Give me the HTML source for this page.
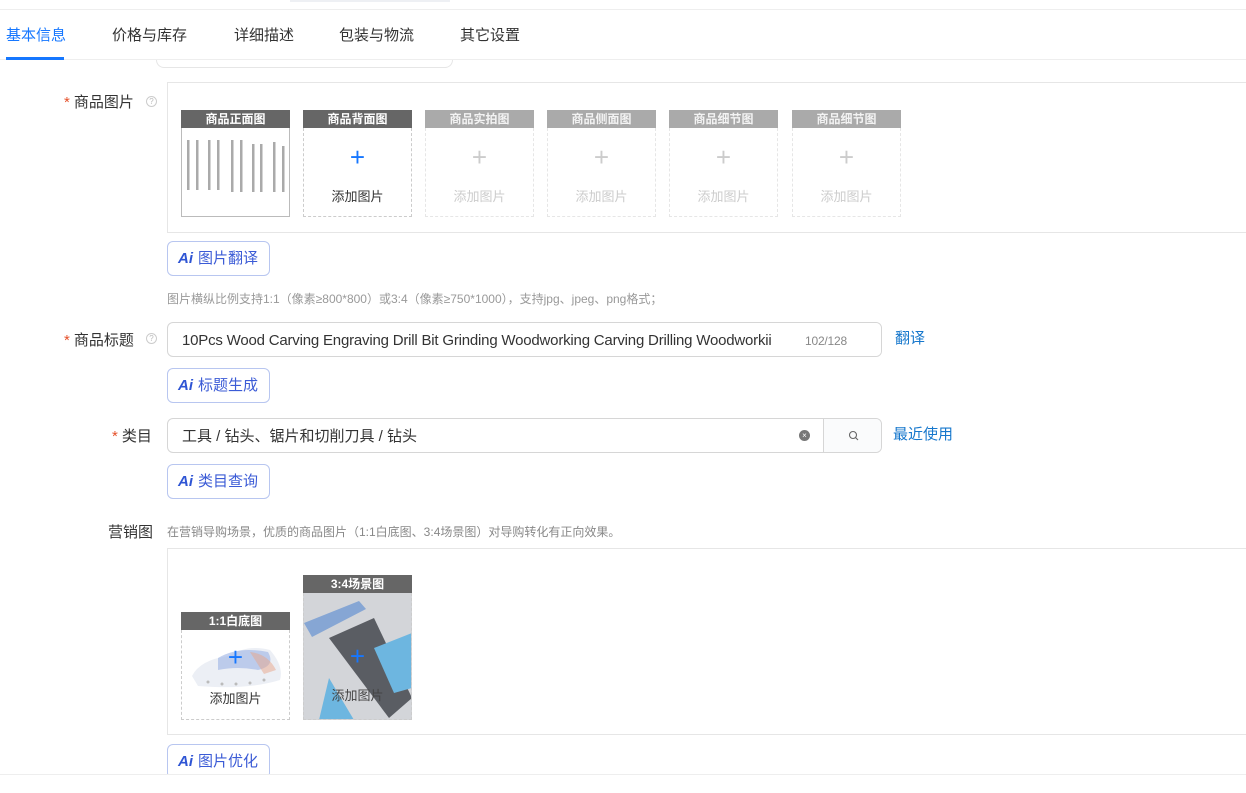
<!DOCTYPE html>
<html><head><meta charset="utf-8"><style>
*{box-sizing:border-box;margin:0;padding:0}
body{width:1246px;height:793px;overflow:hidden;background:#fff;font-family:"Liberation Sans","Noto Sans CJK SC",sans-serif;color:#333;position:relative;font-size:14px}
.a{position:absolute}
.tab{position:absolute;top:24px;font-size:15px;color:#333}
.lbl{position:absolute;font-size:15px;color:#333;text-align:right}
.req{color:#e5502a;margin-right:4px}
.help{position:absolute;width:11px;height:11px;border:1px solid #ccc;border-radius:50%;font-size:8px;color:#bbb;text-align:center;line-height:9px}
.th{position:absolute;width:109px}
.th .h{height:18px;background:#666;color:#fff;font-size:12px;text-align:center;line-height:18px;font-weight:bold}
.th .b{height:89px;border:1px dashed #ccc;border-top:none;position:relative;text-align:center}
.th .p{position:absolute;left:0;right:0;top:14px;font-size:26px;line-height:30px;color:#1677ff}
.th .t{position:absolute;left:0;right:0;top:58px;font-size:13px;color:#333}
.dis .h{background:#aaa;color:#f3f3f3}
.dis .b{border-color:#e6e6e6}
.dis .p{color:#ccc}.dis .t{color:#ccc}
.ai{position:absolute;left:167px;width:103px;height:35px;border:1px solid #b8c6f0;border-radius:6px;font-size:15px;color:#3b5bd6;line-height:33px;padding-left:10px}
.ai i{font-style:italic;font-weight:bold;color:#2f55d4;margin-right:5px;font-size:15px}
.box{position:absolute;left:167px;right:-5px;border:1px solid #e6e6e6}
.inp{position:absolute;left:167px;width:715px;height:35px;border:1px solid #d6d6d6;border-radius:6px;font-size:15px;line-height:36px;padding-left:14px;color:#333;white-space:nowrap;overflow:hidden}
.link{position:absolute;color:#1677cc;font-size:15px}
</style></head><body>
<div class="a" style="left:290px;top:0;width:160px;height:2px;background:#eef0f4"></div>
<div class="a" style="left:0;top:9px;width:1246px;height:1px;background:#eee"></div>
<div class="tab" style="left:6px;color:#1677ff">基本信息</div>
<div class="tab" style="left:112px">价格与库存</div>
<div class="tab" style="left:234px">详细描述</div>
<div class="tab" style="left:339px">包装与物流</div>
<div class="tab" style="left:460px">其它设置</div>
<div class="a" style="left:0;top:59px;width:1246px;height:1px;background:#eee"></div>
<div class="a" style="left:6px;top:57px;width:58px;height:3px;background:#1677ff"></div>
<div class="a" style="left:156px;top:60px;width:297px;height:8px;border:1px solid #e6e6e6;border-top:none;border-radius:0 0 8px 8px"></div>

<div class="lbl" style="left:64px;top:91px"><span class="req">*</span>商品图片</div>
<div class="help" style="left:146px;top:96px">?</div>
<div class="box" style="top:82px;height:151px"></div>
<div class="th" style="left:181px;top:110px"><div class="h">商品正面图</div><div class="b" style="border:1px solid #bbb;border-top:none">
<svg width="107" height="88" viewBox="0 0 107 88"><g fill="#aaa">
<rect x="5" y="12" width="2.5" height="50"/><rect x="14" y="12" width="2.5" height="50"/><rect x="26" y="12" width="2.5" height="50"/><rect x="35" y="12" width="2.5" height="50"/><rect x="49" y="12" width="2.5" height="52"/><rect x="58" y="12" width="2.5" height="52"/><rect x="70" y="16" width="2.5" height="48"/><rect x="78" y="16" width="2.5" height="48"/><rect x="91" y="14" width="2.5" height="50"/><rect x="100" y="18" width="2.5" height="46"/></g></svg></div></div>
<div class="th" style="left:303px;top:110px"><div class="h">商品背面图</div><div class="b"><div class="p">+</div><div class="t">添加图片</div></div></div>
<div class="th dis" style="left:425px;top:110px"><div class="h">商品实拍图</div><div class="b"><div class="p">+</div><div class="t">添加图片</div></div></div>
<div class="th dis" style="left:547px;top:110px"><div class="h">商品侧面图</div><div class="b"><div class="p">+</div><div class="t">添加图片</div></div></div>
<div class="th dis" style="left:669px;top:110px"><div class="h">商品细节图</div><div class="b"><div class="p">+</div><div class="t">添加图片</div></div></div>
<div class="th dis" style="left:792px;top:110px"><div class="h">商品细节图</div><div class="b"><div class="p">+</div><div class="t">添加图片</div></div></div>
<div class="ai" style="top:241px"><i>Ai</i>图片翻译</div>
<div class="a" style="left:167px;top:290px;font-size:12px;color:#999">图片横纵比例支持1:1（像素≥800*800）或3:4（像素≥750*1000），支持jpg、jpeg、png格式；</div>

<div class="lbl" style="left:64px;top:329px"><span class="req">*</span>商品标题</div>
<div class="help" style="left:146px;top:333px">?</div>
<div class="inp" style="top:322px;letter-spacing:-0.2px">10Pcs Wood Carving Engraving Drill Bit Grinding Woodworking Carving Drilling Woodworkii<span style="position:absolute;right:0;top:0;width:80px;background:#fff;color:#888;font-size:12px;padding-left:4px">102/128</span></div>
<div class="link" style="left:895px;top:327px">翻译</div>
<div class="ai" style="top:368px"><i>Ai</i>标题生成</div>

<div class="lbl" style="left:112px;top:425px"><span class="req">*</span>类目</div>
<div class="inp" style="top:418px">工具 / 钻头、锯片和切削刀具 / 钻头
<div class="a" style="left:631px;top:11px;width:11px;height:11px;border-radius:50%;background:#777;color:#fff;font-size:8px;line-height:11px;text-align:center">×</div>
<div class="a" style="left:655px;top:0;width:60px;height:33px;border-left:1px solid #d6d6d6;background:#fafbfc;text-align:center"><svg width="12" height="12" viewBox="0 0 12 12" style="margin-top:11px"><circle cx="5" cy="5" r="3.5" fill="none" stroke="#666" stroke-width="1.1"/><path d="M7.6 7.6L10 10" stroke="#666" stroke-width="1.1"/></svg></div></div>
<div class="link" style="left:893px;top:423px">最近使用</div>
<div class="ai" style="top:464px"><i>Ai</i>类目查询</div>

<div class="lbl" style="left:108px;top:521px">营销图</div>
<div class="a" style="left:167px;top:523px;font-size:12px;color:#888">在营销导购场景，优质的商品图片（1:1白底图、3:4场景图）对导购转化有正向效果。</div>
<div class="box" style="top:548px;height:187px"></div>
<div class="th" style="left:181px;top:612px"><div class="h">1:1白底图</div><div class="b" style="height:90px">
<svg class="a" style="left:6px;top:10px" width="96" height="50" viewBox="0 0 96 50"><path d="M4 36 Q12 20 40 16 Q60 4 82 10 Q96 26 92 40 Q60 50 10 46 Z" fill="#eceff5"/><path d="M30 18 Q50 6 80 12 Q88 26 70 30 Q50 26 30 30Z" fill="#9db3e4" opacity=".6"/><path d="M62 12 Q80 14 88 30 L76 34Z" fill="#e8a58a" opacity=".5"/><g fill="#bbb"><circle cx="20" cy="42" r="1.5"/><circle cx="34" cy="44" r="1.5"/><circle cx="48" cy="44" r="1.5"/><circle cx="62" cy="43" r="1.5"/><circle cx="76" cy="40" r="1.5"/></g></svg>
<div class="p" style="top:12px;color:#1677ff">+</div><div class="t" style="top:58px">添加图片</div></div></div>
<div class="th" style="left:303px;top:575px"><div class="h">3:4场景图</div><div class="b" style="height:127px;background:#d3d5d9;overflow:hidden">
<svg class="a" style="left:0;top:0" width="108" height="127" viewBox="0 0 108 127"><path d="M0 30 L55 8 L62 16 L8 44Z" fill="#86a6d4"/><path d="M25 45 L70 25 L108 105 L85 125 Z" fill="#5a5d63"/><path d="M70 55 L108 40 L108 95 L90 100Z" fill="#6db6e0"/><path d="M25 85 L50 127 L15 127Z" fill="#6db6e0"/></svg>
<div class="p" style="top:48px;color:#1677ff">+</div><div class="t" style="top:92px;color:#444">添加图片</div></div></div>
<div class="ai" style="top:744px"><i>Ai</i>图片优化</div>
<div class="a" style="left:0;top:774px;width:1246px;height:19px;background:#fff;border-top:1px solid #eee"></div>
</body></html>
